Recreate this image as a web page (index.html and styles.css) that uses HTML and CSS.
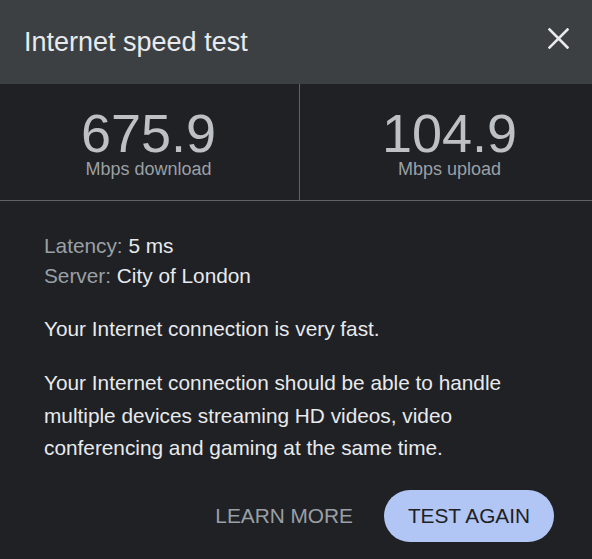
FILE: index.html
```html
<!DOCTYPE html>
<html lang="en">
<head>
<meta charset="utf-8">
<title>Internet speed test</title>
<link rel="stylesheet" href="styles.css">
</head>
<body>
<div class="dialog">
  <header class="header">
    <h1 class="title">Internet speed test</h1>
    <button class="close" aria-label="Close">
      <svg width="21" height="21" viewBox="0 0 21 21"><path d="M1.5 1.5L19.5 19.5M19.5 1.5L1.5 19.5" stroke="#e8eaed" stroke-width="2.6" stroke-linecap="square" fill="none"/></svg>
    </button>
  </header>
  <section class="stats">
    <div class="stat stat-left">
      <div class="stat-value">675.9</div>
      <div class="stat-label">Mbps download</div>
    </div>
    <div class="stat stat-right">
      <div class="stat-value">104.9</div>
      <div class="stat-label">Mbps upload</div>
    </div>
  </section>
  <section class="content">
    <div class="info">
      <div class="info-row"><span class="info-key">Latency:</span> 5 ms</div>
      <div class="info-row"><span class="info-key">Server:</span> City of London</div>
    </div>
    <p class="para para-first">Your Internet connection is very fast.</p>
    <p class="para para-second">Your Internet connection should be able to handle multiple devices streaming HD videos, video conferencing and gaming at the same time.</p>
    <div class="actions">
      <button class="btn-text">LEARN MORE</button>
      <button class="btn-pill">TEST AGAIN</button>
    </div>
  </section>
</div>
</body>
</html>
```

FILE: styles.css
```css
html, body {
  margin: 0;
  padding: 0;
  background: #202124;
  height: 100%;
  overflow: hidden;
}

body {
  font-family: "Liberation Sans", Arial, sans-serif;
  color: #e8eaed;
}

.header {
  height: 84px;
  background: #3c4043;
  display: flex;
  align-items: center;
  justify-content: space-between;
  padding: 0 23px 0 24px;
  box-sizing: border-box;
}

.title {
  margin: 0;
  font-size: 27px;
  line-height: 32px;
  font-weight: normal;
  color: #e8eaed;
}

.close {
  background: none;
  border: 0;
  padding: 0;
  width: 21px;
  height: 21px;
  display: block;
  margin-bottom: 7px;
  cursor: pointer;
}

.close svg {
  display: block;
}

.stats {
  display: flex;
  height: 117px;
  box-sizing: border-box;
  border-bottom: 1px solid #5f6368;
}

.stat {
  display: flex;
  flex-direction: column;
  align-items: center;
  padding-top: 23px;
  box-sizing: border-box;
}

.stat-left {
  width: 299px;
  padding-right: 2px;
}

.stat-right {
  flex: 1;
  border-left: 1px solid #5f6368;
  padding-left: 7px;
}

.stat-value {
  font-size: 54px;
  line-height: 52px;
  color: #bdc1c6;
}

.stat-label {
  font-size: 18px;
  line-height: 20px;
  color: #9aa0a6;
}

.content {
  padding: 30px 38px 0 44px;
  font-size: 20.8px;
}

.info-row {
  line-height: 30px;
  color: #e8eaed;
}

.info-key {
  color: #9aa0a6;
}

.para {
  margin: 0;
  line-height: 32.5px;
  color: #e8eaed;
}

.para-first {
  margin-top: 22px;
}

.para-second {
  margin-top: 21.5px;
}

.actions {
  display: flex;
  justify-content: flex-end;
  align-items: center;
  gap: 23px;
  margin-top: 25px;
}

.btn-text,
.btn-pill {
  font-family: "Liberation Sans", Arial, sans-serif;
  font-size: 20.8px;
  border: 0;
  cursor: pointer;
}

.btn-text {
  background: none;
  color: #9aa0a6;
  padding: 0 8px;
  height: 52px;
}

.btn-pill {
  background: #b1c6f4;
  color: #202124;
  height: 52px;
  padding: 0 24px;
  border-radius: 26px;
}
```
